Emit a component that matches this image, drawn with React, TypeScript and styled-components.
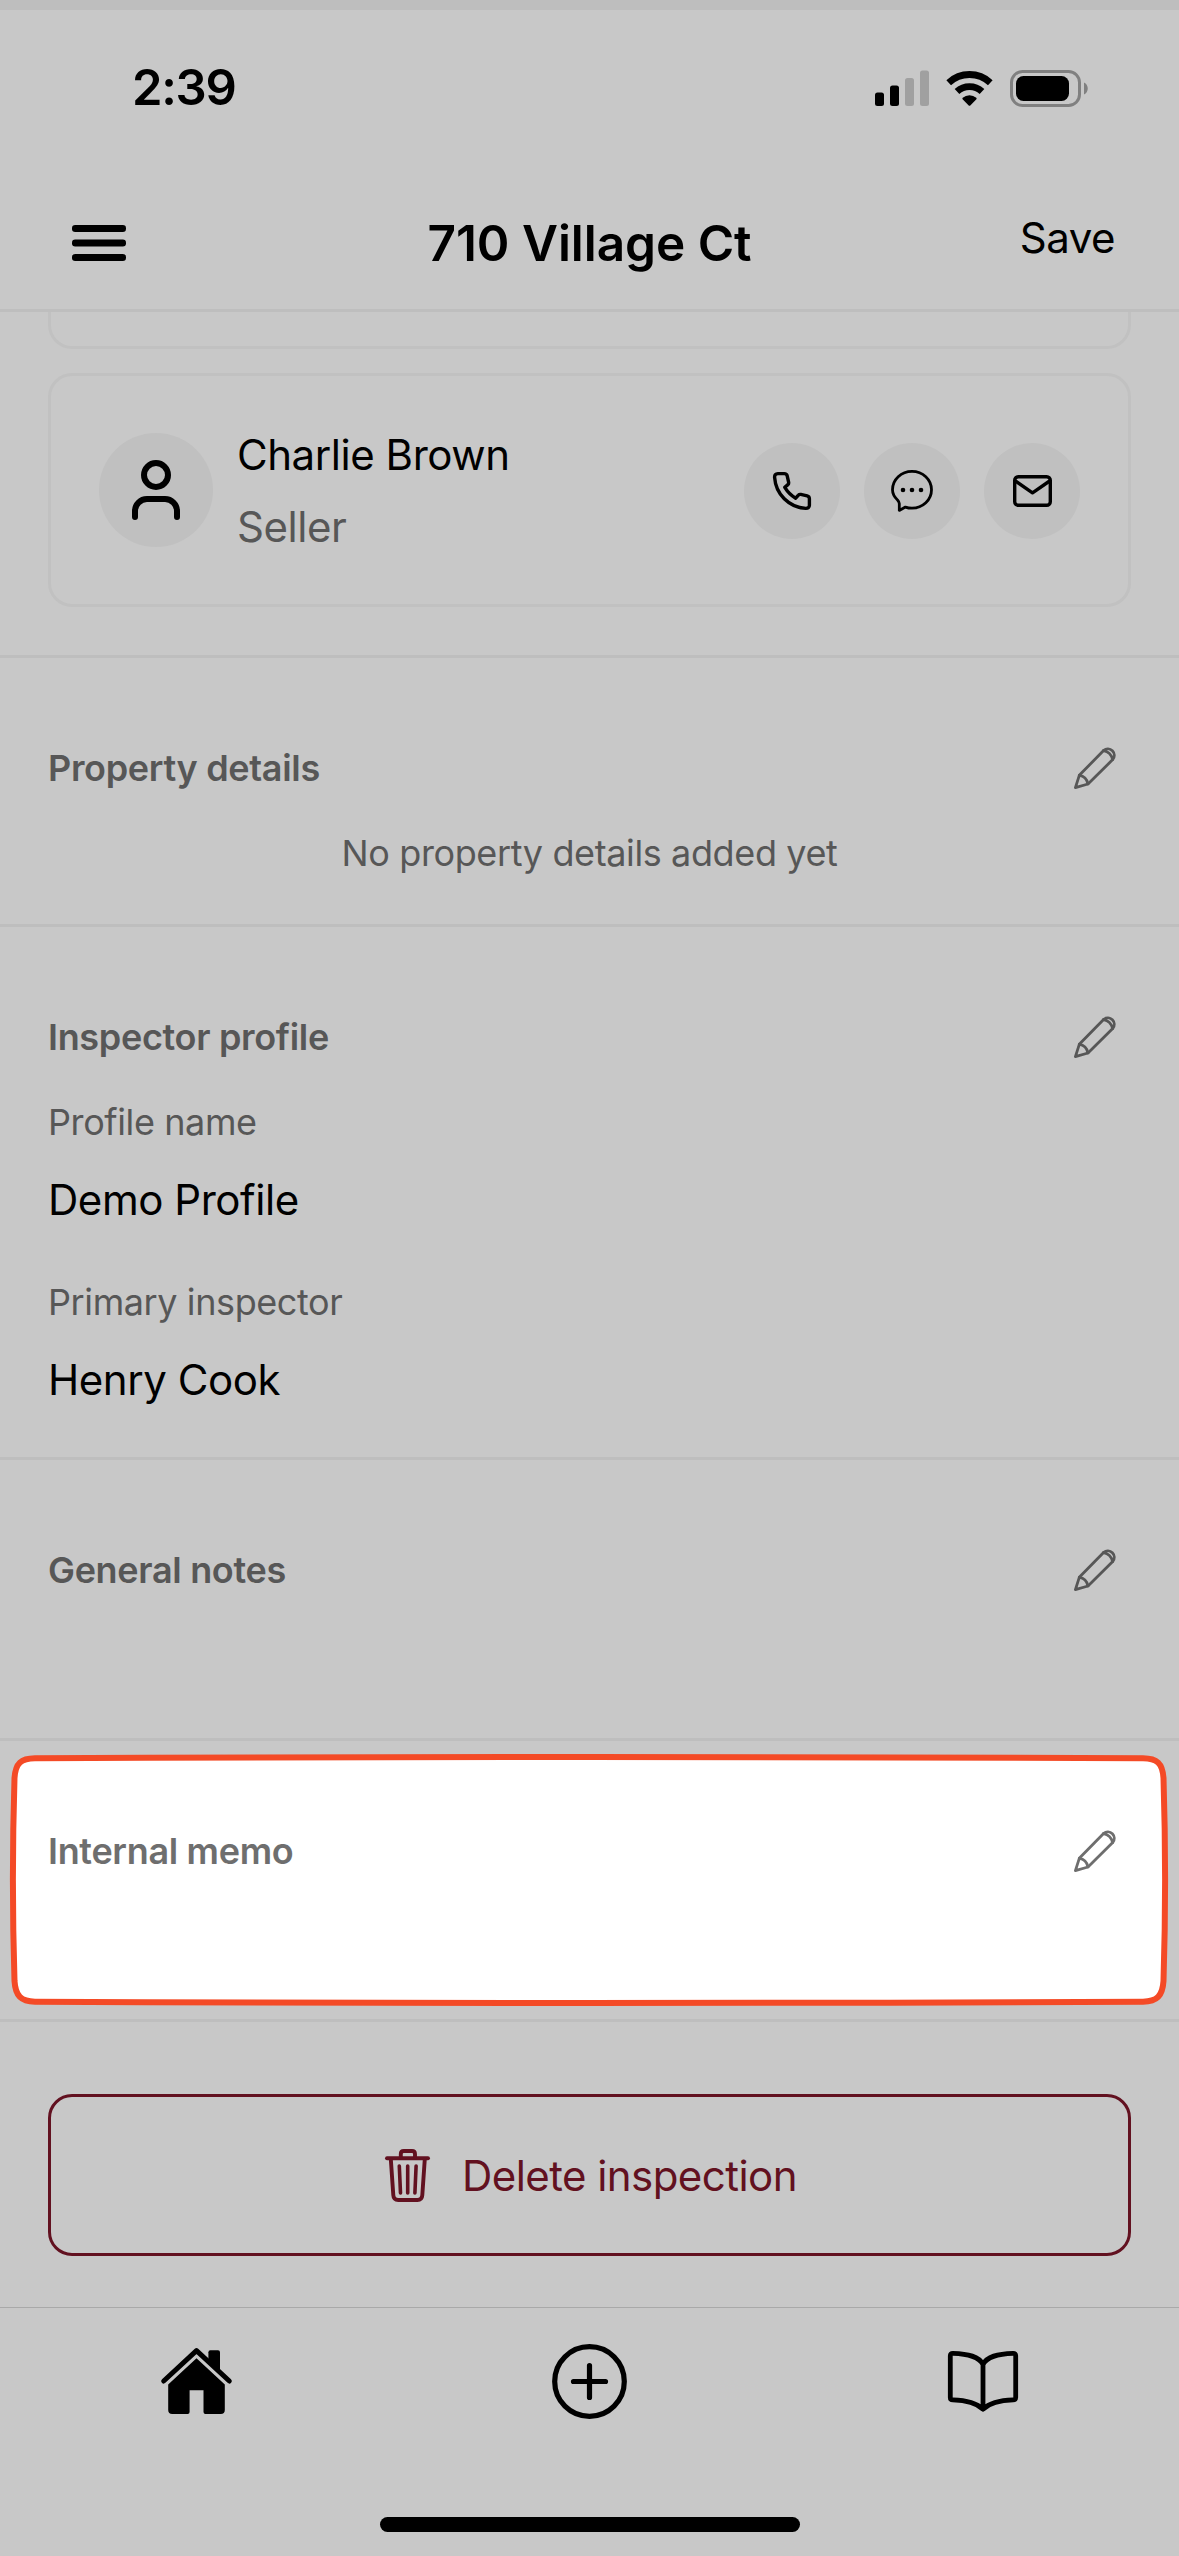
import React from 'react';
import styled, { createGlobalStyle } from 'styled-components';
import { User } from 'lucide-react';

const colors = {
  page: '#c8c8c8',
  strip: '#bebebe',
  line: '#bebebe',
  cardLine: '#c1c1c1',
  bubble: '#c0c0c0',
  muted: '#575757',
  danger: '#621120',
  accent: '#f44a26',
};

const GlobalStyle = createGlobalStyle`
  * { box-sizing: border-box; }
  body { margin: 0; background: ${colors.page}; }
  button { border: 0; padding: 0; margin: 0; background: none; font: inherit; color: inherit; }
  svg { display: block; overflow: visible; }
`;

const Screen = styled.div`
  width: 1179px;
  height: 2556px;
  overflow: hidden;
  display: flex;
  flex-direction: column;
  background: ${colors.page};
  color: #000;
  font-family: Inter, Roboto, sans-serif;
`;

const TopStrip = styled.div`
  height: 10px;
  background: ${colors.strip};
`;

const StatusBar = styled.div`
  height: 156px;
  padding: 0 91px 0 132px;
  display: flex;
  align-items: center;
  justify-content: space-between;
`;

const Time = styled.div`
  font-size: 49px;
  font-weight: 600;
  line-height: 60px;
  letter-spacing: -1.3px;
`;

const StatusIcons = styled.div`
  display: flex;
  align-items: center;
  gap: 17px;
`;

const Header = styled.header`
  height: 146px;
  padding: 11px 64px 0 72px;
  border-bottom: 3px solid ${colors.line};
  display: grid;
  grid-template-columns: 200px 1fr 208px;
  align-items: center;
`;

const Title = styled.h1`
  margin: 0;
  text-align: center;
  font-size: 49.5px;
  font-weight: 600;
  line-height: 60px;
  letter-spacing: -0.03px;
`;

const SaveButton = styled.button`
  justify-self: end;
  margin-bottom: 10px;
  font-size: 42px;
  line-height: 50px;
  letter-spacing: -0.5px;
`;

const Content = styled.main`
  flex: 1;
`;

const Contacts = styled.section`
  height: 346px;
  padding: 0 48px;
  border-bottom: 3px solid ${colors.line};
  display: flex;
  flex-direction: column;
  gap: 24px;
`;

const CardTail = styled.div`
  height: 37px;
  border: 3px solid ${colors.cardLine};
  border-top: 0;
  border-radius: 0 0 24px 24px;
`;

const Card = styled.article`
  height: 234px;
  padding: 0 48px;
  border: 3px solid ${colors.cardLine};
  border-radius: 24px;
  display: flex;
  align-items: center;
  gap: 24px;
`;

const Bubble = styled.div<{ $size: number }>`
  width: ${(p) => p.$size}px;
  height: ${(p) => p.$size}px;
  border-radius: 50%;
  background: ${colors.bubble};
  display: flex;
  align-items: center;
  justify-content: center;
`;

const Person = styled.div`
  flex: 1;
  padding-top: 2px;
  display: flex;
  flex-direction: column;
  gap: 22px;
  font-size: 42px;
  line-height: 50px;
  letter-spacing: -0.45px;
`;

const Role = styled.span`
  color: ${colors.muted};
`;

const Actions = styled.div`
  padding-top: 1px;
  display: flex;
  gap: 24px;
`;

const Section = styled.section<{ $height: number }>`
  position: relative;
  height: ${(p) => p.$height}px;
  padding: 86px 48px 0;
  border-bottom: 3px solid ${colors.line};
  display: flex;
  flex-direction: column;
`;

const SectionHead = styled.div<{ $lit?: boolean }>`
  position: relative;
  height: 48px;
  display: flex;
  align-items: center;
  justify-content: space-between;
  color: ${(p) => (p.$lit ? '#6e6e6e' : colors.muted)};
`;

const SectionTitle = styled.h2`
  margin: 0;
  font-size: 36px;
  font-weight: 600;
  line-height: 48px;
  letter-spacing: -0.32px;
`;

const EditButton = styled.button`
  width: 72px;
  height: 48px;
  display: flex;
  align-items: center;
  justify-content: center;
`;

const Empty = styled.p`
  margin: 37px 0 0;
  text-align: center;
  font-size: 36px;
  line-height: 48px;
  letter-spacing: -0.38px;
  color: ${colors.muted};
`;

const Fields = styled.dl`
  margin: 37px 0 0;
  display: flex;
  flex-direction: column;
  gap: 50px;
`;

const Field = styled.div`
  display: flex;
  flex-direction: column;
  gap: 26px;
`;

const Label = styled.dt`
  font-size: 36px;
  line-height: 48px;
  letter-spacing: -0.4px;
  color: ${colors.muted};
`;

const Value = styled.dd`
  margin: 0;
  font-size: 42px;
  line-height: 56px;
  letter-spacing: -0.45px;
`;

const Marker = styled.svg`
  position: absolute;
  left: 10px;
  top: 13px;
`;

const Danger = styled.div`
  padding: 72px 48px 0;
`;

const DeleteButton = styled.button`
  width: 100%;
  height: 162px;
  padding-left: 3px;
  border: 3px solid ${colors.danger};
  border-radius: 24px;
  color: ${colors.danger};
  display: flex;
  align-items: center;
  justify-content: center;
  gap: 32px;
  font-size: 42px;
  line-height: 50px;
  letter-spacing: -0.56px;
`;

const DeleteLabel = styled.span`
  padding-top: 2px;
`;

const TabBar = styled.nav`
  height: 249px;
  border-top: 1px solid #a9a9a9;
  display: flex;
  flex-direction: column;
  align-items: center;
`;

const Tabs = styled.div`
  width: 100%;
  height: 146px;
  display: grid;
  grid-template-columns: repeat(3, 1fr);
`;

const Tab = styled.button`
  display: flex;
  align-items: center;
  justify-content: center;
`;

const HomeIndicator = styled.div`
  margin-top: 63px;
  width: 420px;
  height: 15px;
  border-radius: 8px;
  background: #000;
`;

const stroke = {
  fill: 'none',
  stroke: 'currentColor',
  strokeLinecap: 'round' as const,
  strokeLinejoin: 'round' as const,
};

const SignalIcon = () => (
  <svg width="54" height="36" viewBox="0 0 54 36">
    <rect x="0" y="22.5" width="9" height="13.5" rx="2.5" />
    <rect x="15" y="15.5" width="9" height="20.5" rx="2.5" />
    <rect x="30" y="8" width="9" height="28" rx="2.5" fill="#a0a0a0" />
    <rect x="45" y="0.5" width="9" height="35.5" rx="2.5" fill="#a0a0a0" />
  </svg>
);

const WifiIcon = () => (
  <svg width="47" height="35" viewBox="0 0 47 35" fill="none" stroke="#000">
    <path strokeWidth="6.8" d="M2.7 11.7A30.5 30.5 0 0 1 44.3 11.7" />
    <path strokeWidth="6.8" d="M11 20.6A18.3 18.3 0 0 1 36 20.6" />
    <path
      fill="#000"
      stroke="none"
      d="M16.6 28.2Q16 27.4 16.7 26.8A10.4 10.4 0 0 1 30.3 26.8Q31 27.4 30.4 28.2L24.3 34.4Q23.5 35.2 22.7 34.4Z"
    />
  </svg>
);

const BatteryIcon = () => (
  <svg width="78" height="37" viewBox="0 0 78 37">
    <rect x="1.5" y="1.5" width="68" height="34" rx="11" fill="none" stroke="#808080" strokeWidth="3" />
    <rect x="6" y="6" width="53" height="25" rx="7.5" />
    <path d="M74 12.5C79 14.5 79 22.5 74 24.5Z" fill="#808080" />
  </svg>
);

const MenuIcon = () => (
  <svg width="54" height="36" viewBox="0 0 54 36">
    <rect y="0" width="54" height="7" rx="3.2" />
    <rect y="14.5" width="54" height="7" rx="3.2" />
    <rect y="29" width="54" height="7" rx="3.2" />
  </svg>
);

const PhoneIcon = () => (
  <svg width="38" height="38" viewBox="0 0 38 38" {...stroke} strokeWidth="3.4">
    <path d="M1.6 5.3C1.5 3.2 2.6 1.6 4.8 1.6H11.2C12.8 1.6 13.9 2.3 14.2 3.8L15.6 10.2C15.8 11.2 15.6 12 14.9 12.6L11.8 15.3C14.6 19.9 18.1 23.4 22.7 26.2L25.4 23.2C26 22.5 26.8 22.2 27.8 22.4L34.2 23.8C35.7 24.2 36.4 25.2 36.4 26.8V33.2C36.4 35.4 34.9 36.5 32.7 36.4C15.8 35.2 2.8 22.2 1.6 5.3Z" />
  </svg>
);

const ChatIcon = () => (
  <svg width="42" height="42" viewBox="0 0 42 42" {...stroke} strokeWidth="2.8">
    <path d="M21 1.4C31.8 1.4 40.5 9.6 40.5 19.8S31.8 38.2 21 38.2C18.5 38.2 16.4 37.8 14.4 37.1L8.3 40.4V33.6Q8.2 31.9 6.7 30.2C3.5 27.2 1.5 23.8 1.5 19.8C1.5 9.6 10.2 1.4 21 1.4Z" />
    <g fill="currentColor" stroke="none">
      <circle cx="12" cy="20" r="2.3" />
      <circle cx="21" cy="20" r="2.3" />
      <circle cx="30" cy="20" r="2.3" />
    </g>
  </svg>
);

const MailIcon = () => (
  <svg width="39" height="32" viewBox="0 0 39 32" {...stroke} strokeWidth="3.4">
    <rect x="1.7" y="1.7" width="35.6" height="28.6" rx="3.6" />
    <path d="M2.4 6L19.5 17.8L36.6 6" />
  </svg>
);

const PencilIcon = () => (
  <svg width="42" height="42" viewBox="0 0 42 42" {...stroke} strokeWidth="2.8">
    <path d="M1.4 40.6L5.3 28.3L29.6 3.5A6.45 6.45 0 0 1 38.7 12.6L14 37Z" />
    <path d="M5.3 28.3C9.8 28.8 13 32.3 14 37" />
    <path d="M29.6 3.5C33.8 4.2 37.6 8 38.7 12.6" />
  </svg>
);

const TrashIcon = () => (
  <svg width="45" height="53" viewBox="0 0 45 53" {...stroke} strokeWidth="3.9">
    <path d="M2 9.3H43" />
    <path d="M15.8 9V5Q15.8 2 18.8 2H27Q30 2 30 5V9" />
    <path d="M5.8 10L8.3 46.2Q8.6 51 13.2 51H32.4Q37 51 37.3 46.2L39.8 10" />
    <path strokeWidth="3.6" d="M14.3 17L15.5 44M22.7 17V44M31.1 17L29.9 44" />
  </svg>
);

const HomeIcon = () => (
  <svg width="71" height="66" viewBox="0 0 71 66">
    <path {...stroke} strokeWidth="5" d="M2.7 33L35.5 2.6L68.3 33" />
    <path d="M47.4 12V4.3Q47.4 2.3 49.4 2.3H57Q59 2.3 59 4.3V24Z" />
    <path d="M35.5 10.2L63.8 36.4V62Q63.8 66 59.8 66H44.5Q42.5 66 42.5 64V42.3H28.6V64Q28.6 66 26.6 66H11.2Q7.2 66 7.2 62V36.4Z" />
  </svg>
);

const PlusIcon = () => (
  <svg width="75" height="75" viewBox="0 0 75 75" {...stroke} strokeWidth="5.2">
    <circle cx="37.5" cy="37.5" r="34.8" />
    <path d="M37.5 21.5V53.5M21.5 37.5H53.5" />
  </svg>
);

const BookIcon = () => (
  <svg width="70" height="61" viewBox="0 0 70 61" {...stroke} strokeWidth="4.8">
    <path d="M35 13.5C31 5.5 20.5 2.9 4.8 2.3Q2.3 2.3 2.3 4.8V46.5Q2.3 48.8 4.8 48.9C19 49.3 28 51.5 35 58.2C42 51.5 51 49.3 65.2 48.9Q67.7 48.8 67.7 46.5V4.8Q67.7 2.3 65.2 2.3C49.5 2.9 39 5.5 35 13.5ZV58.2" />
  </svg>
);

interface HeadProps {
  title: string;
  lit?: boolean;
}

const Head = ({ title, lit }: HeadProps) => (
  <SectionHead $lit={lit}>
    <SectionTitle>{title}</SectionTitle>
    <EditButton aria-label={`Edit ${title}`}>
      <PencilIcon />
    </EditButton>
  </SectionHead>
);

const profile = [
  { label: 'Profile name', value: 'Demo Profile' },
  { label: 'Primary inspector', value: 'Henry Cook' },
];

export default function App() {
  return (
    <>
      <GlobalStyle />
      <Screen>
        <TopStrip />
        <StatusBar>
          <Time>2:39</Time>
          <StatusIcons>
            <SignalIcon />
            <WifiIcon />
            <BatteryIcon />
          </StatusIcons>
        </StatusBar>
        <Header>
          <MenuIcon />
          <Title>710 Village Ct</Title>
          <SaveButton>Save</SaveButton>
        </Header>
        <Content>
          <Contacts>
            <CardTail />
            <Card>
              <Bubble $size={114}>
                <User size={72} strokeWidth={2} />
              </Bubble>
              <Person>
                <span>Charlie Brown</span>
                <Role>Seller</Role>
              </Person>
              <Actions>
                <Bubble as="button" $size={96} aria-label="Call">
                  <PhoneIcon />
                </Bubble>
                <Bubble as="button" $size={96} aria-label="Message">
                  <ChatIcon />
                </Bubble>
                <Bubble as="button" $size={96} aria-label="Email">
                  <MailIcon />
                </Bubble>
              </Actions>
            </Card>
          </Contacts>
          <Section $height={269}>
            <Head title="Property details" />
            <Empty>No property details added yet</Empty>
          </Section>
          <Section $height={533}>
            <Head title="Inspector profile" />
            <Fields>
              {profile.map((f) => (
                <Field key={f.label}>
                  <Label>{f.label}</Label>
                  <Value>{f.value}</Value>
                </Field>
              ))}
            </Fields>
          </Section>
          <Section $height={281}>
            <Head title="General notes" />
          </Section>
          <Section $height={281}>
            <Marker width="1158" height="252" viewBox="0 0 1158 252">
              <path
                fill="#fff"
                stroke={colors.accent}
                strokeWidth="6"
                d="M25 4.3Q579 1.7 1133 4.3C1147 4.5 1152.5 9 1153.5 24Q1156.7 126 1153.5 227C1152.5 242 1147 247.5 1133 247.7Q579 250.3 25 247.7C11 247.5 5.5 242 4.5 227Q1.3 126 4.5 24C5.5 9 11 4.5 25 4.3Z"
              />
            </Marker>
            <Head title="Internal memo" lit />
          </Section>
          <Danger>
            <DeleteButton>
              <TrashIcon />
              <DeleteLabel>Delete inspection</DeleteLabel>
            </DeleteButton>
          </Danger>
        </Content>
        <TabBar>
          <Tabs>
            <Tab aria-label="Home">
              <HomeIcon />
            </Tab>
            <Tab aria-label="Add">
              <PlusIcon />
            </Tab>
            <Tab aria-label="Library">
              <BookIcon />
            </Tab>
          </Tabs>
          <HomeIndicator />
        </TabBar>
      </Screen>
    </>
  );
}
